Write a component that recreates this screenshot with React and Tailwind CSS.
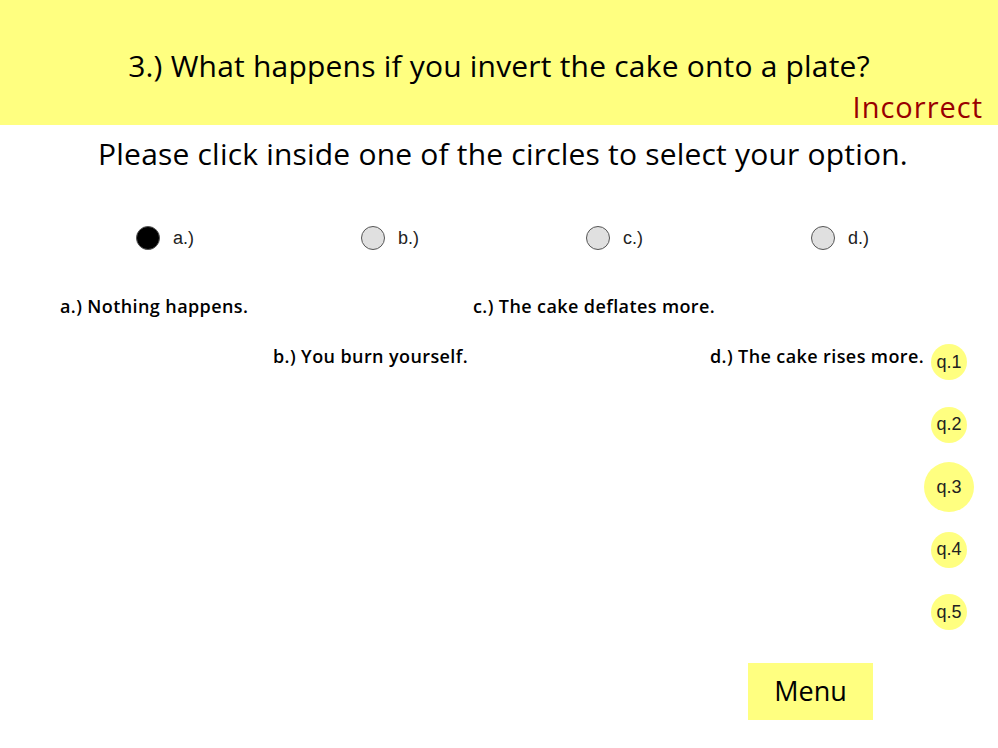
import React from 'react';

const comic = { fontFamily: '"Comic Sans MS", "Open Sans", sans-serif' };

const options = ['a.)', 'b.)', 'c.)', 'd.)'];
const questions = [
  { label: 'q.1', size: 'w-[36px] h-[36px]' },
  { label: 'q.2', size: 'w-[36px] h-[36px]' },
  { label: 'q.3', size: 'w-[50px] h-[50px]' },
  { label: 'q.4', size: 'w-[36px] h-[36px]' },
  { label: 'q.5', size: 'w-[36px] h-[36px]' },
];

export default function App() {
  return (
    <div className="w-[998px] h-[748px] bg-white overflow-hidden text-black">
      {/* header */}
      <header className="h-[125px] bg-[#ffff80] flex flex-col pt-[44px]" style={comic}>
        <h1 className="text-center text-[30px] leading-[44px] tracking-[0.2px]">
          3.) What happens if you invert the cake onto a plate?
        </h1>
        <div className="self-end pr-[15px] text-[29px] leading-[30px] tracking-[1px] text-[#990000] mt-[4px]">Incorrect</div>
      </header>

      <p className="mt-[9px] text-center text-[30px] leading-[40px] tracking-[0.2px] pl-[8px]" style={comic}>
        Please click inside one of the circles to select your option.
      </p>

      {/* radio choices */}
      <div className="mt-[52px] flex pl-[136px] font-['Liberation_Sans',sans-serif]">
        {options.map((o, i) => (
          <div key={o} className="w-[225px] shrink-0 flex items-center gap-[13px] h-[24px]">
            <span
              className={
                'w-[24px] h-[24px] rounded-full border border-[#555] ' +
                (i === 0 ? 'bg-black' : 'bg-[#e0e0e0]')
              }
            />
            <span className="text-[18px] text-[#222]">{o}</span>
          </div>
        ))}
      </div>

      {/* answers + question nav */}
      <div className="flex">
        <div className="flex-1 pt-[44px] text-[18px] font-semibold tracking-[0.4px]" style={comic}>
          <div className="flex h-[24px] items-center pl-[60px]">
            <span className="w-[413px] shrink-0">a.) Nothing happens.</span>
            <span>c.) The cake deflates more.</span>
          </div>
          <div className="flex h-[24px] items-center pl-[273px] mt-[26px]">
            <span className="w-[437px] shrink-0">b.) You burn yourself.</span>
            <span className="whitespace-nowrap">d.) The cake rises more.</span>
          </div>
        </div>
        <div className="w-[50px] mr-[25px] pt-[81px] flex flex-col font-['Liberation_Sans',sans-serif]">
          {questions.map((q) => (
            <div key={q.label} className="h-[62.5px] flex items-center justify-center">
              <span
                className={q.size + ' rounded-full bg-[#ffff80] flex items-center justify-center text-[18px] text-[#222]'}
              >
                {q.label}
              </span>
            </div>
          ))}
        </div>
      </div>

      <div className="flex justify-end pr-[125px] mt-[19px]">
        <button className="w-[125px] h-[57px] bg-[#ffff80] text-[27px]" style={comic}>
          Menu
        </button>
      </div>
    </div>
  );
}
